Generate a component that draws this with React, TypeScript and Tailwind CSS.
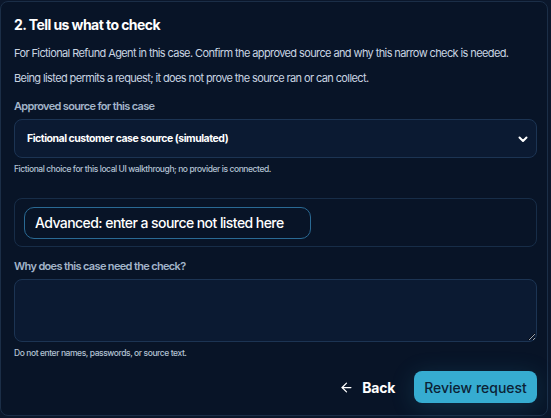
import { ArrowLeft } from "lucide-react";

/* ---------- Component ---------- */

export default function App() {
  return (
    <div className="min-h-[418px] w-[551px] bg-[#0b172b] pt-px font-['Inter','Liberation_Sans',sans-serif]">
      <section className="h-[415px] w-[548px] rounded-lg border border-[#1b2e47] bg-[#081427] pb-[13px] pl-[13px] pr-[10px] pt-[13px]">
        <h2 className="text-[14px] font-bold leading-5 tracking-[-0.04em] text-white">
          2. Tell us what to check
        </h2>

        <p className="mt-[9px] whitespace-nowrap text-[11px] leading-[18px] tracking-[-0.055em] text-[#c9d4e2]">
          For Fictional Refund Agent in this case. Confirm the approved source
          and why this narrow check is needed.
        </p>
        <p className="mt-[7px] text-[11px] leading-[18px] tracking-[-0.055em] text-[#c9d4e2]">
          Being listed permits a request; it does not prove the source ran or
          can collect.
        </p>

        <label className="mt-[11px] block text-[11px] font-semibold leading-4 tracking-[-0.06em] text-[#a3b5ca]">
          Approved source for this case
        </label>
        <div className="mt-[5px] flex h-[39px] items-center justify-between rounded-lg border border-[#1c3453] bg-[#0b1a32] pl-[12px] pr-[7px]">
          <span className="text-[10.5px] font-bold tracking-[-0.045em] text-white">
            Fictional customer case source (simulated)
          </span>
          <svg width="12" height="12" viewBox="0 0 24 24" fill="none">
            <path
              d="M5 9l7 7 7-7"
              stroke="white"
              strokeWidth="4"
              strokeLinecap="round"
              strokeLinejoin="round"
            />
          </svg>
        </div>
        <p className="mt-[5px] text-[8.5px] font-medium leading-3 tracking-[-0.05em] text-[#b3c2d3]">
          Fictional choice for this local UI walkthrough; no provider is
          connected.
        </p>

        <div className="mt-[23px] flex h-[49px] items-center rounded-lg border border-[#172d48] px-[9px]">
          <button className="h-[32px] w-[287px] rounded-[10px] border border-[#2a6a94] pl-[10px] text-left text-[14px] font-medium tracking-[-0.04em] text-white">
            Advanced: enter a source not listed here
          </button>
        </div>

        <label className="mt-[11px] block text-[11px] font-semibold leading-4 tracking-[-0.06em] text-[#a3b5ca]">
          Why does this case need the check?
        </label>
        <textarea className="mt-[5px] block h-[63px] w-full rounded-lg border border-[#1c3453] bg-[#0b1a32] outline-none" />
        <p className="mt-[5px] text-[8.5px] font-medium leading-3 tracking-[-0.05em] text-[#b3c2d3]">
          Do not enter names, passwords, or source text.
        </p>

        <div className="mt-[12px] flex items-center justify-end gap-[19px]">
          <button className="flex items-center gap-[8px] text-[14px] font-bold tracking-[-0.02em] text-white">
            <ArrowLeft size={15} strokeWidth={2} />
            Back
          </button>
          <button className="h-[32px] w-[123px] rounded-lg bg-[#36acd1] text-[14px] font-medium text-[#0b2235] shadow-[0_4px_24px_rgba(54,172,209,0.18)]">
            Review request
          </button>
        </div>
      </section>
    </div>
  );
}
